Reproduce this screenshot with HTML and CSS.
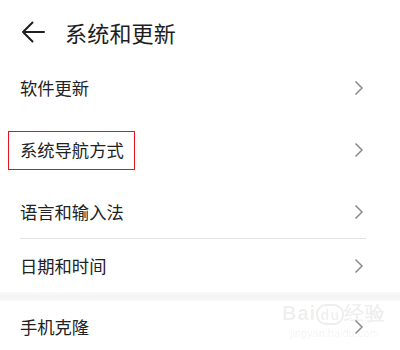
FILE: index.html
```html
<!DOCTYPE html>
<html lang="zh">
<head>
<meta charset="utf-8">
<link rel="stylesheet" href="styles.css">
</head>
<body>
<div class="page">
  <header class="header">
    <svg class="back" width="24" height="22" viewBox="0 0 24 22">
      <path d="M23 11 H2 M11.5 1.5 L2 11 L11.5 20.5" fill="none" stroke="#1e1e1e" stroke-width="2" stroke-linecap="round" stroke-linejoin="round"/>
    </svg>
    <h1 class="title">系统和更新</h1>
  </header>
  <div class="row r62"><span class="label">软件更新</span><svg class="chev" width="10" height="16" viewBox="0 0 10 16"><path d="M1.5 1.5 L8 8 L1.5 14.5" fill="none" stroke="#8c8c8c" stroke-width="1.5"/></svg></div>
  <div class="row r62"><span class="label boxed">系统导航方式</span><svg class="chev" width="10" height="16" viewBox="0 0 10 16"><path d="M1.5 1.5 L8 8 L1.5 14.5" fill="none" stroke="#8c8c8c" stroke-width="1.5"/></svg></div>
  <div class="row r57"><span class="label">语言和输入法</span><svg class="chev" width="10" height="16" viewBox="0 0 10 16"><path d="M1.5 1.5 L8 8 L1.5 14.5" fill="none" stroke="#8c8c8c" stroke-width="1.5"/></svg></div>
  <div class="divider"></div>
  <div class="row r53"><span class="label">日期和时间</span><svg class="chev" width="10" height="16" viewBox="0 0 10 16"><path d="M1.5 1.5 L8 8 L1.5 14.5" fill="none" stroke="#8c8c8c" stroke-width="1.5"/></svg></div>
  <div class="band"></div>
  <div class="row r52"><span class="label">手机克隆</span><svg class="chev" width="10" height="16" viewBox="0 0 10 16"><path d="M1.5 1.5 L8 8 L1.5 14.5" fill="none" stroke="#8c8c8c" stroke-width="1.5"/></svg></div>
  <div class="watermark">
    <span class="wm-main">Bai<span class="wm-du">du</span>经验</span>
    <span class="wm-url">jingyan.baidu.com</span>
  </div>
</div>
</body>
</html>
```
FILE: styles.css
```css
* { box-sizing: border-box; }
html, body { margin: 0; padding: 0; background: #fff; }
body {
  font-family: "Noto Sans CJK SC", "Noto Sans", sans-serif;
  color: #1e1e1e;
  width: 400px;
  height: 350px;
  overflow: hidden;
}
.page { position: relative; width: 400px; height: 350px; }
.header {
  height: 57px;
  padding: 7px 0 0 21px;
  display: flex;
  align-items: center;
}
.back { flex: none; }
.title {
  margin: 0 0 0 20px;
  font-size: 22px;
  font-weight: 400;
  line-height: 28px;
  letter-spacing: 0.2px;
}
.row {
  display: flex;
  align-items: center;
  justify-content: space-between;
  padding: 0 36px 0 20px;
}
.r62 { height: 62px; }
.r57 { height: 57px; padding-top: 5px; }
.r53 { height: 53px; }
.r52 { height: 52px; }
.label {
  font-size: 17.3px;
  line-height: 24px;
  color: #222;
}
.boxed {
  margin-left: -12px;
  padding: 6px 10px 7px 11px;
  border: 1.5px solid #e8121a;
}
.chev { flex: none; }
.divider {
  height: 1px;
  margin: 0 34px 0 20px;
  background: #e3e3e3;
}
.band {
  height: 9px;
  background: linear-gradient(#f9f9f9, #f3f3f3 50%, #f9f9f9);
}
.watermark {
  position: absolute;
  left: 282px;
  top: 302px;
  display: flex;
  flex-direction: column;
  align-items: center;
  color: rgba(0, 0, 0, 0.07);
  font-family: "Liberation Sans", sans-serif;
  pointer-events: none;
}
.wm-main { font-size: 20px; font-weight: 700; line-height: 22px; letter-spacing: 1px; }
.wm-du { border: 2px solid rgba(0,0,0,0.07); border-radius: 10px; padding: 0 2px; font-size: 15px; }
.wm-url { font-size: 11px; line-height: 14px; }
```
